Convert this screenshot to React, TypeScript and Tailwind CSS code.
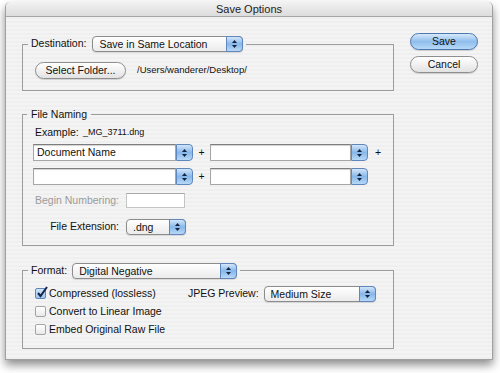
import React from 'react';

function Stepper() {
  return (
    <span className="flex w-[17px] shrink-0 flex-col items-center justify-center gap-[2px] rounded-r-[4px] border border-[#5f86bd] bg-linear-to-b from-[#d3e6f9] via-[#86b7ea] to-[#b9d8f6]">
      <svg width="5" height="3" viewBox="0 0 5 3">
        <path d="M2.5 0L5 3H0z" fill="#15233d" />
      </svg>
      <svg width="5" height="3" viewBox="0 0 5 3">
        <path d="M0 0h5L2.5 3z" fill="#15233d" />
      </svg>
    </span>
  );
}

function Popup({ label, w }: { label: string; w: string }) {
  return (
    <div
      className={`flex h-[16px] items-stretch rounded-[4px] border border-[#8c8c8c] bg-linear-to-b from-white to-[#ebebeb] shadow-[0_1px_1px_rgba(0,0,0,0.12)] ${w}`}
    >
      <span className="flex-1 truncate pl-[6px] leading-[14px] text-[#111]">{label}</span>
      <span className="-my-px -mr-px flex">
        <Stepper />
      </span>
    </div>
  );
}

function Combo({ label, w }: { label?: string; w: string }) {
  return (
    <div className={`flex h-[17px] items-stretch ${w}`}>
      <span className="flex-1 border border-[#a7a7a7] border-t-[#7d7d7d] bg-white pl-[3px] leading-[15px] text-[#111] shadow-[inset_0_1px_1px_rgba(0,0,0,0.18)]">
        {label}
      </span>
      <Stepper />
    </div>
  );
}

function PillButton({ label, w, primary }: { label: string; w: string; primary?: boolean }) {
  return (
    <button
      className={`h-[17px] rounded-full border text-center leading-[15px] text-[#111] shadow-[0_1px_1px_rgba(0,0,0,0.15)] ${w} ${
        primary
          ? 'border-[#4d76b0] bg-linear-to-b from-[#d8eafb] via-[#8fbdec] to-[#b7d9f7]'
          : 'border-[#8e8e8e] bg-linear-to-b from-white via-[#f1f1f1] to-[#e2e2e2]'
      }`}
    >
      {label}
    </button>
  );
}

function Check({ checked, label }: { checked?: boolean; label: string }) {
  return (
    <div className="flex h-[18px] items-center gap-[3px]">
      <span
        className={`relative h-[11px] w-[11px] rounded-[2px] border ${
          checked
            ? 'border-[#5f86bd] bg-linear-to-b from-[#cfe4f8] to-[#9cc6ee]'
            : 'border-[#a3a3a3] bg-linear-to-b from-white to-[#e9e9e9]'
        }`}
      >
        {checked && (
          <svg className="absolute -top-[3px] left-[1px]" width="11" height="12" viewBox="0 0 11 12">
            <path d="M1 7l2.5 3L10 1" fill="none" stroke="#14254a" strokeWidth="2" />
          </svg>
        )}
      </span>
      <span>{label}</span>
    </div>
  );
}

export default function App() {
  return (
    <div className="h-[373px] w-[500px] bg-white pl-[5px] pt-[2px] [font-family:'Liberation_Sans',Arial,sans-serif] text-[10.5px] text-[#111]">
      <div className="flex h-[358px] w-[488px] flex-col rounded-t-[5px] border border-t-0 border-[#a0a0a0] bg-[repeating-linear-gradient(0deg,#efefef_0px,#efefef_2px,#f4f4f4_2px,#f4f4f4_4px)] shadow-[0_5px_10px_rgba(0,0,0,0.45)]">
        <div className="h-[15px] rounded-t-[5px] border-b border-[#a7a7a7] bg-linear-to-b from-[#f2f2f2] to-[#dcdcdc] text-center text-[11px] leading-[15px] text-[#222]">
          Save Options
        </div>

        <div className="flex flex-1 pl-[16px] pr-[14px]">
          <div className="w-[372px]">
            <fieldset className="mt-[19px] border border-[#9c9c9c] pb-[11px] pl-[12px]">
              <legend className="-ml-[7px] flex items-center gap-[6px] px-[3px]">
                <span>Destination:</span>
                <Popup label="Save in Same Location" w="w-[151px]" />
              </legend>
              <div className="mt-[10px] flex items-center">
                <PillButton label="Select Folder..." w="w-[91px]" />
                <span className="ml-[11px] text-[9.5px]">/Users/wanderer/Desktop/</span>
              </div>
            </fieldset>

            <fieldset className="mt-[16px] border border-[#9c9c9c] pb-[10px] pl-[10px]">
              <legend className="-ml-[6px] px-[4px] leading-[14px]">File Naming</legend>
              <div className="mt-[5px] flex h-[13px] items-center pl-[2px]">
                <span className="w-[48px]">Example:</span>
                <span className="text-[9px]">_MG_3711.dng</span>
              </div>
              <div className="mt-[5px] flex items-center">
                <Combo label="Document Name" w="w-[160px]" />
                <span className="w-[17px] text-center">+</span>
                <Combo w="w-[158px]" />
                <span className="w-[20px] text-center">+</span>
              </div>
              <div className="mt-[7px] flex items-center">
                <Combo w="w-[160px]" />
                <span className="w-[17px] text-center">+</span>
                <Combo w="w-[158px]" />
              </div>
              <div className="mt-[8px] flex items-center">
                <span className="w-[86px] text-right text-[#9b9b9b]">Begin Numbering:</span>
                <span className="ml-[7px] h-[15px] w-[59px] border border-[#c4c4c4] border-t-[#a9a9a9] bg-white" />
              </div>
              <div className="mt-[10px] flex items-center">
                <span className="w-[86px] text-right">File Extension:</span>
                <span className="ml-[7px]">
                  <Popup label=".dng" w="w-[60px]" />
                </span>
              </div>
            </fieldset>

            <fieldset className="mt-[17px] border border-[#9c9c9c] pb-[9px] pl-[12px]">
              <legend className="-ml-[7px] flex items-center gap-[5px] px-[3px]">
                <span>Format:</span>
                <Popup label="Digital Negative" w="w-[165px]" />
              </legend>
              <div className="mt-[6px] flex">
                <div className="w-[153px]">
                  <Check checked label="Compressed (lossless)" />
                  <Check label="Convert to Linear Image" />
                  <Check label="Embed Original Raw File" />
                </div>
                <div className="flex h-[18px] items-center">
                  <span>JPEG Preview:</span>
                  <span className="ml-[5px]">
                    <Popup label="Medium Size" w="w-[112px]" />
                  </span>
                </div>
              </div>
            </fieldset>
          </div>

          <div className="ml-[16px] mt-[16px] flex flex-col gap-[6px]">
            <PillButton label="Save" w="w-[68px]" primary />
            <PillButton label="Cancel" w="w-[68px]" />
          </div>
        </div>
      </div>
    </div>
  );
}
